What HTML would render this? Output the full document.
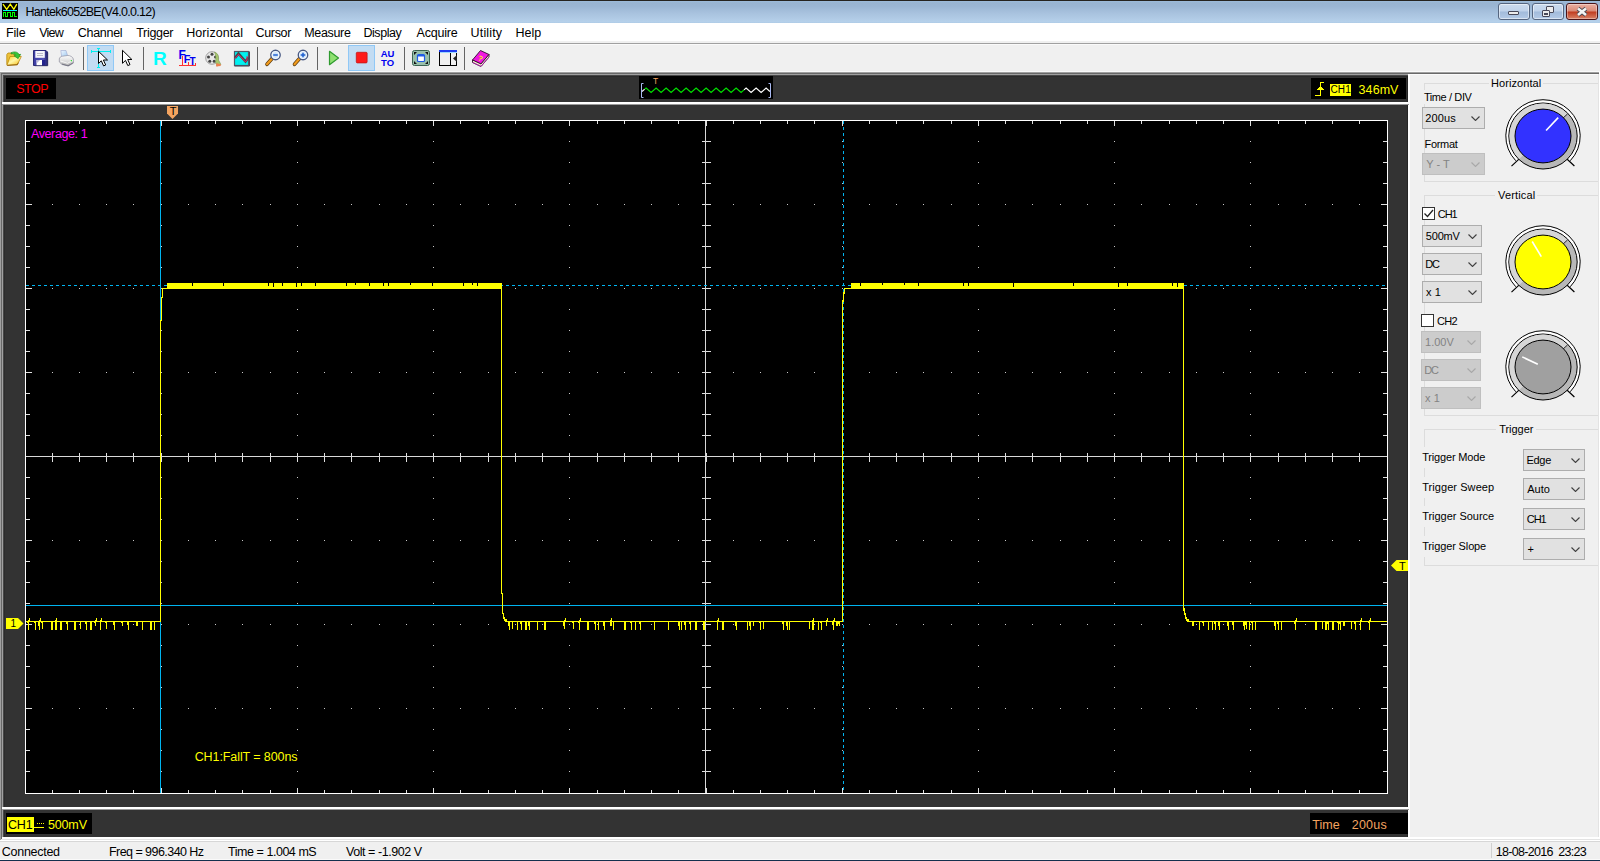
<!DOCTYPE html>
<html><head><meta charset="utf-8"><title>Hantek6052BE(V4.0.0.12)</title>
<style>
*{box-sizing:border-box;margin:0;padding:0}
html,body{width:1600px;height:861px;overflow:hidden;background:#f0f0f0}
body{position:relative;font-family:"Liberation Sans",sans-serif;font-size:11px;color:#000}
.abs{position:absolute}
#title{left:0;top:0;width:1600px;height:23px;background:linear-gradient(#9dbcdc 0,#99b4d1 8%,#9bb6d4 25%,#a8c2de 55%,#b5d0ea 94%,#aecbe6 100%);border-top:1px solid #26231f}
#title .cap{position:absolute;left:26px;top:4px;font-size:12.5px;line-height:15px;color:#000;transform:scaleX(.885);transform-origin:0 0;white-space:nowrap}
#menu{left:0;top:23px;width:1600px;height:18px;background:#fff}
#menu span{position:absolute;top:4px;font-size:12px;line-height:15px}
#tb{left:0;top:43px;width:1600px;height:29px;background:#f0f0f0;border-top:1px solid #a0a0a0}
.sep{position:absolute;top:47px;width:1px;height:23px;background:#646464}
.hot{position:absolute;top:45px;height:26px;width:27px;background:#c2dcf3;border:1px solid #90c8f6}
#scope{left:3px;top:75px;width:1405px;height:762px;background:#333}
.bar{position:absolute;z-index:2;left:2px;width:1407px;height:3px;background:linear-gradient(#fff 0,#fff 66%,#9a9a9a 67%,#9a9a9a 100%)}
.box{position:absolute;background:#000;color:#ff0;font-size:12px;line-height:21px;height:21px;white-space:nowrap}
#right{left:1408px;top:74px;width:192px;height:763px;background:#f0f0f0;border-top:1px solid #fafafa;border-left:2px solid #fff}
.grp{position:absolute;border:1px solid #dcdcdc;border-right:none}
.grp b{position:absolute;top:-8px;font-weight:normal;background:#f0f0f0;padding:0 2px;line-height:14px}
.lbl{position:absolute;line-height:14px;white-space:nowrap}
.cb{position:absolute;height:22px;background:#e1e1e1;border:1px solid #adadad}
.cb.dis{background:#cccccc;border-color:#bfbfbf;color:#838383}
.chk{position:absolute;width:13px;height:13px;background:#fff;border:1px solid #333}
#status{left:0;top:842px;width:1600px;height:19px;background:#f0f0f0;border-bottom:1px solid #14304e;box-shadow:inset 0 -1px 0 #fafafa;font-size:12px}
#status span{position:absolute;top:2px;line-height:15px;white-space:nowrap}
</style></head><body>
<div id="title" class="abs"><svg class="abs" style="left:2px;top:2px" width="16" height="16" viewBox="0 0 16 16"><rect width="16" height="16" fill="#000"/><path d="M1 1.2L4.7 6.3L8.3 1.2L11.8 6.3L14.8 1.2" fill="none" stroke="#ff0" stroke-width="1.3"/><rect x="1" y="7" width="14" height="1" fill="#0ff" shape-rendering="crispEdges"/><path d="M1.5 13.5V9.5H3.5V13.5H5.5V9.5H8V13.5H10V9.5H12.5V13.5H14.5" fill="none" stroke="#0f0" stroke-width="1" shape-rendering="crispEdges"/></svg><div class="abs" style="left:1498px;top:2px;width:32px;height:17px;border:1px solid #55657f;border-radius:3px;background:linear-gradient(#cbdbee 0,#bfd2ea 47%,#a2bbdb 53%,#b4cae6 100%);box-shadow:inset 0 0 0 1px rgba(255,255,255,.5)"><i class="abs" style="left:9px;top:7px;width:11px;height:4px;background:#ececec;border:1px solid #484858;border-radius:1px"></i></div><div class="abs" style="left:1532px;top:2px;width:32px;height:17px;border:1px solid #55657f;border-radius:3px;background:linear-gradient(#cbdbee 0,#bfd2ea 47%,#a2bbdb 53%,#b4cae6 100%);box-shadow:inset 0 0 0 1px rgba(255,255,255,.5)"><i class="abs" style="left:13px;top:2px;width:8px;height:7px;background:#ececec;border:1px solid #484858;border-radius:1px"></i><i class="abs" style="left:9px;top:6px;width:8px;height:7px;background:#ececec;border:1px solid #484858;border-radius:1px"></i><i class="abs" style="left:11px;top:9px;width:4px;height:2px;background:#8ea6cc;border:1px solid #484858"></i></div><div class="abs" style="left:1566px;top:2px;width:32px;height:17px;border:1px solid #4a1418;border-radius:3px;background:linear-gradient(#eab0a2 0,#d98a76 47%,#c03c20 53%,#d88266 100%);box-shadow:inset 0 0 0 1px rgba(255,255,255,.35)"><svg class="abs" style="left:8px;top:2px" width="14" height="12" viewBox="0 0 14 12"><path d="M3 2.500l8 6.500M11 2.500l-8 6.500" stroke="#4a4a52" stroke-width="4.200"/><path d="M3 2.500l8 6.500M11 2.500l-8 6.500" stroke="#f4f4f4" stroke-width="2.600"/></svg></div></div>
<span class="abs" style="left:25.50px;top:4px;font-size:12.5px;line-height:16px;letter-spacing:-0.72px;white-space:pre;">Hantek6052BE(V4.0.0.12)</span><div id="menu" class="abs"></div><span class="abs" style="left:6.00px;top:25px;font-size:12.5px;line-height:16px;letter-spacing:-0.18px;white-space:pre;">File</span><span class="abs" style="left:39.20px;top:25px;font-size:12.5px;line-height:16px;letter-spacing:-0.73px;white-space:pre;">View</span><span class="abs" style="left:77.78px;top:25px;font-size:12.5px;line-height:16px;letter-spacing:-0.29px;white-space:pre;">Channel</span><span class="abs" style="left:136.25px;top:25px;font-size:12.5px;line-height:16px;letter-spacing:-0.32px;white-space:pre;">Trigger</span><span class="abs" style="left:186.30px;top:25px;font-size:12.5px;line-height:16px;letter-spacing:0.04px;white-space:pre;">Horizontal</span><span class="abs" style="left:255.57px;top:25px;font-size:12.5px;line-height:16px;letter-spacing:-0.35px;white-space:pre;">Cursor</span><span class="abs" style="left:304.20px;top:25px;font-size:12.5px;line-height:16px;letter-spacing:-0.32px;white-space:pre;">Measure</span><span class="abs" style="left:363.40px;top:25px;font-size:12.5px;line-height:16px;letter-spacing:-0.43px;white-space:pre;">Display</span><span class="abs" style="left:416.50px;top:25px;font-size:12.5px;line-height:16px;letter-spacing:-0.21px;white-space:pre;">Acquire</span><span class="abs" style="left:470.62px;top:25px;font-size:12.5px;line-height:16px;letter-spacing:0.15px;white-space:pre;">Utility</span><span class="abs" style="left:515.60px;top:25px;font-size:12.5px;line-height:16px;letter-spacing:-0.02px;white-space:pre;">Help</span>
<div id="tb" class="abs"></div><div class="abs" style="left:0;top:44px;width:1600px;height:1px;background:#fafafa"></div>
<div class="hot" style="left:87px"></div><div class="hot" style="left:348px"></div>
<div class="sep" style="left:83px"></div><div class="sep" style="left:143px"></div><div class="sep" style="left:257px"></div><div class="sep" style="left:317px"></div><div class="sep" style="left:404px"></div><div class="sep" style="left:464px"></div>
<svg class="abs" style="left:0;top:44px" width="500" height="29" viewBox="0 44 500 29">
<!-- open folder -->
<defs>
<linearGradient id="gf" x1="0" y1="0" x2="1" y2="1"><stop offset="0" stop-color="#ffd21e"/><stop offset=".45" stop-color="#fff7a8"/><stop offset="1" stop-color="#f5b400"/></linearGradient>
<linearGradient id="gs" x1="0" y1="0" x2="1" y2="0"><stop offset="0" stop-color="#3c3ca4"/><stop offset=".7" stop-color="#5454b8"/><stop offset="1" stop-color="#26266c"/></linearGradient>
<linearGradient id="gp" x1="0" y1="0" x2="0" y2="1"><stop offset="0" stop-color="#fdfdfd"/><stop offset=".6" stop-color="#d8d8d8"/><stop offset="1" stop-color="#a8a8a8"/></linearGradient>
<linearGradient id="gpp" x1="0" y1="0" x2="1" y2="1"><stop offset="0" stop-color="#eef6ff"/><stop offset="1" stop-color="#9cc8f0"/></linearGradient>
</defs>
<g stroke-linejoin="round">
<path d="M6.800 64.800V54.500l1.200-1.500h4l1.200 1.500h6.300v3" fill="#eec23a" stroke="#b88a10" stroke-width=".8"/>
<path d="M7 65.300l3-8.800h11.300l-4 8.200z" fill="url(#gf)" stroke="#c08a0c" stroke-width=".8"/>
<path d="M7.300 65.400l10-0.700l1-2" fill="none" stroke="#8a5a08" stroke-width=".9"/>
<path d="M11 52.800c3.500-1.800 7.200-0.800 8 1.800l1.700-0.300l-2.600 4.400l-4.200-3l1.900-0.400c-0.800-1.500-2.800-1.900-4.800-1.300z" fill="#37c637" stroke="#1e8a1e" stroke-width=".6"/>
</g>
<!-- save -->
<g>
<path d="M33.500 50.500h12.500l1.500 1.500v13.500h-14z" fill="url(#gs)" stroke="#2a2a78" stroke-width="1"/>
<rect x="35.300" y="51" width="9.500" height="6.800" fill="#f6f6fa"/>
<path d="M37 53.500h6M37 55.500h6" stroke="#b4b4c4" stroke-width=".9"/>
<rect x="36.500" y="60" width="9" height="5.300" fill="#24248c"/>
<path d="M36.500 60h5.500v5.300h-5.500z" fill="#fff"/>
<path d="M36.500 60h3.500l-3.500 3.500z" fill="#b8b8d8"/>
<path d="M47.800 52.500v13.300h-13" fill="none" stroke="#39395a" stroke-width=".8" opacity=".7"/>
</g>
<!-- print -->
<g stroke-linejoin="round">
<path d="M60.800 50.500h5.200l1.800 5.800l-6 1.200z" fill="url(#gpp)" stroke="#9aa8d0" stroke-width=".6"/>
<path d="M59.300 59c0-1.500 1.500-2.500 3-2.800l5.500-0.700c2-0.200 5.200 1.500 5.500 3.500l0.200 4l-5 3l-6.500-1.500l-2.700-2.500z" fill="url(#gp)" stroke="#8e8e9e" stroke-width=".7"/>
<path d="M60.500 61l7 2.300l5.500-3" fill="none" stroke="#fff" stroke-width=".8"/>
<path d="M62 64l6 1.800l5-3" fill="none" stroke="#6a6a7a" stroke-width=".8"/>
<rect x="70.800" y="60" width="1.300" height="1.300" fill="#3cd83c"/>
</g>
<!-- cross cursor -->
<g shape-rendering="crispEdges">
<path d="M91 51h20v1h-20zM98 48h1v20h-1zM97 48h3v1h-3zM97 67h3v1h-3zM91 50h1v3h-1zM110 50h1v3h-1z" fill="#00f0f0"/>
</g>
<path d="M98.500 51.300v12.200l2.800-2.700l2.300 5.100l2.100-0.900l-2.300-5h4.100z" fill="#fff" stroke="#000" stroke-width="1"/>
<!-- arrow -->
<path d="M122.500 50.300v13l3-2.900l2.300 5.200l2.200-1l-2.300-5.100h4.200z" fill="#fff" stroke="#000" stroke-width="1"/>
<!-- R -->
<text x="159.800" y="65" text-anchor="middle" font-family="Liberation Sans, sans-serif" font-weight="bold" font-size="19" fill="#00ffff">R</text>
<!-- FFT -->
<g font-family="Liberation Sans, sans-serif" font-weight="bold" fill="#0000f0">
<text x="178.500" y="59" font-size="12">F</text>
<text x="183.800" y="63" font-size="11">F</text>
<text x="189.500" y="65" font-size="10">T</text>
</g>
<path d="M179 65.500h16.500M182.500 56v9.500M188.500 62v3.500M195 63v2.500" stroke="#ff3030" stroke-width="1" fill="none" shape-rendering="crispEdges"/>
<!-- film reel -->
<g>
<circle cx="212" cy="58" r="6.300" fill="#e8e8e8" stroke="#8c8c8c" stroke-width=".8"/>
<circle cx="212" cy="54.200" r="1.500" fill="#444"/><circle cx="208.500" cy="57" r="1.500" fill="#444"/><circle cx="215.500" cy="57" r="1.500" fill="#444"/><circle cx="209.800" cy="61.300" r="1.500" fill="#444"/><circle cx="214.200" cy="61.300" r="1.500" fill="#444"/>
<path d="M214.500 52c3.500 1 4.500 5 4 8l2.500 4.500l-4 1.500l-1.500-4c0.500-3 0.500-7-1-10z" fill="#a6c86e" stroke="#7a9050" stroke-width=".5"/>
<path d="M216.500 63l4.500 1.500l-0.500 1.500l-4.500 0.500z" fill="#f08050"/>
</g>
<!-- wave -->
<g>
<rect x="234.500" y="51.500" width="14" height="14" fill="#00f0f0" stroke="#505868" stroke-width="1.200"/><path d="M234.500 66h15v-14.500" fill="none" stroke="#404858" stroke-width="1"/>
<path d="M235 58l3.500-4.500l7 8l3-4" fill="none" stroke="#484848" stroke-width="2.600"/>
<path d="M235 58.500l3.500-4l7 7.500l1.500-2v-4" fill="none" stroke="#e0206c" stroke-width="1"/>
</g>
<!-- zoom out -->
<g>
<path d="M272.300 58.300l-5.300 6" stroke="#5a3c10" stroke-width="3.600" stroke-linecap="round"/><path d="M272.300 58.300l-5.300 6" stroke="#f09a1c" stroke-width="2.200" stroke-linecap="round"/>

<circle cx="275.500" cy="55" r="4.700" fill="#cfe4fa" stroke="#4a5a84" stroke-width="1.400"/>
<circle cx="275.500" cy="55" r="3.500" fill="none" stroke="#fff" stroke-width=".8"/>
<path d="M273.200 55h4.600" stroke="#2060d0" stroke-width="1.500"/>
</g>
<!-- zoom in -->
<g>
<path d="M299.800 58.300l-5.300 6" stroke="#5a3c10" stroke-width="3.600" stroke-linecap="round"/><path d="M299.800 58.300l-5.300 6" stroke="#f09a1c" stroke-width="2.200" stroke-linecap="round"/>

<circle cx="303" cy="55" r="4.700" fill="#cfe4fa" stroke="#4a5a84" stroke-width="1.400"/>
<circle cx="303" cy="55" r="3.500" fill="none" stroke="#fff" stroke-width=".8"/>
<path d="M300.700 55h4.600M303 52.700v4.600" stroke="#2060d0" stroke-width="1.500"/>
</g>
<!-- play -->
<path d="M329.500 51.300l9 6.700l-9 6.700z" fill="#8ee070" stroke="#2e9a2e" stroke-width="1.200" stroke-linejoin="round"/>
<!-- stop -->
<rect x="356.300" y="52.300" width="10.800" height="10.600" rx="1" fill="#ff1a1a" stroke="#c01818" stroke-width=".8"/>
<!-- AUTO -->
<g font-family="Liberation Sans, sans-serif" font-weight="bold" font-size="9.500" fill="#0000f0" text-anchor="middle">
<text x="387.600" y="57">AU</text><text x="387.600" y="66">TO</text>
</g>
<!-- full screen -->
<g>
<rect x="412.500" y="50.500" width="17" height="15" rx="2" fill="#98c0ac" stroke="#3c6452" stroke-width="1"/>
<path d="M414 52h3l-3 3zM428 52h-3l3 3zM414 64h3l-3-3zM428 64h-3l3-3z" fill="#101010"/>
<rect x="417.500" y="54.500" width="7" height="7" rx="1" fill="#fff" stroke="#1e5ae6" stroke-width="1.200"/>
<rect x="418" y="55" width="6" height="1.500" fill="#1e5ae6"/>
</g>
<!-- window -->
<g shape-rendering="crispEdges">
<rect x="439.500" y="50.500" width="17" height="15" fill="#f0f0f0" stroke="#000" stroke-width="1"/>
<rect x="439" y="50" width="18" height="2" fill="#1e3cf0"/>
<rect x="440" y="52" width="17" height="1" fill="#9fd8ff"/>
<rect x="450" y="53" width="1" height="12" fill="#000"/>
</g>
<path d="M457 55l-4 3.500l4 3.500z" fill="#222"/>
<!-- book -->
<g stroke-linejoin="round">
<path d="M472.500 60l8-9.500l8.500 4l-8 9.500z" fill="#f018e0" stroke="#30082c" stroke-width=".9"/>
<path d="M472.500 60v2.500l8.500 4l8-9.500v-2.500l-8 9.500z" fill="#fafad0" stroke="#30082c" stroke-width=".9"/>
<path d="M473 62.500l8 3.800l7.800-9.200" fill="none" stroke="#c020c0" stroke-width=".8"/>
<text x="480.500" y="61" text-anchor="middle" font-family="Liberation Sans, sans-serif" font-weight="bold" font-size="7.500" fill="#ffe020" stroke="none" transform="rotate(25 480.500 58)">?</text>
</g>
</svg>

<div id="scope" class="abs"></div>
<div class="abs" style="left:0;top:71px;width:1600px;height:1px;background:#fafafa"></div>
<div class="abs" style="left:0;top:72px;width:1599px;height:1px;background:#a0a0a0"></div>
<div class="abs" style="left:1px;top:73px;width:1598px;height:1px;background:#696969"></div>
<div class="abs" style="left:0;top:72px;width:1px;height:768px;background:#a0a0a0"></div>
<div class="abs" style="left:1px;top:73px;width:1px;height:766px;background:#696969"></div>
<div class="abs" style="left:2px;top:74px;width:1406px;height:1px;background:#a0a0a0"></div>
<div class="abs" style="left:2px;top:74px;width:1px;height:764px;background:#a0a0a0"></div>
<div class="abs" style="left:3px;top:75px;width:1405px;height:1px;background:#484848"></div>
<div class="abs" style="left:3px;top:75px;width:1px;height:762px;background:#484848"></div>
<div class="abs" style="left:4px;top:76px;width:1404px;height:1px;background:#2c2c2c"></div>
<div class="abs" style="left:4px;top:76px;width:1px;height:761px;background:#2c2c2c"></div>
<div class="abs" style="left:1407px;top:76px;width:1px;height:761px;background:#262626"></div>
<div class="bar" style="top:102px"></div>
<div class="bar" style="top:807px"></div>
<div class="box" style="left:6px;top:78px;width:50px"></div>
<div class="box" style="left:1311px;top:78px;width:95px"><svg class="abs" style="left:4px;top:4px" width="10" height="14" viewBox="0 0 10 14" shape-rendering="crispEdges"><path fill="#ff0" d="M0 13h5v1h-5zM5 0h1v14h-1zM5 0h4v1h-4zM2 7h7v1h-7zM3 6h5v1h-5zM4 5h3v1h-3zM5 4h1v1h-1z"/></svg><span class="abs" style="left:19px;top:6px;height:12px;width:21px;background:#ff0"></span></div>
<div class="box" style="left:6px;top:813px;width:86px"><span class="abs" style="left:1px;top:4px;height:15px;width:27px;background:#ff0"></span><svg class="abs" style="left:28px;top:10px" width="10" height="5" viewBox="0 0 10 5" shape-rendering="crispEdges"><path fill="#ff0" d="M0 4h10v1h-10zM3 0h1v1h-1zM5 0h1v1h-1zM7 0h1v1h-1zM9 0h1v1h-1z"/></svg></div>
<div class="box" style="left:1310px;top:813px;width:98px"></div>
<div class="box" style="left:639px;top:76px;width:134px;height:23px"><svg class="abs" style="left:0;top:0" width="134" height="23" viewBox="0 0 134 23"><polyline points="3.0,15.5 5.7,13.2" fill="none" stroke="#fff" stroke-width="1.1"/><polyline points="5.7,13.2 7.1,12.0 12.1,16.5 17.1,12.0 22.1,16.5 27.1,12.0 32.1,16.5 37.1,12.0 42.1,16.5 47.1,12.0 52.1,16.5 57.1,12.0 62.1,16.5 67.1,12.0 72.1,16.5 77.1,12.0 82.1,16.5 87.1,12.0 92.1,16.5 97.1,12.0 102.1,16.5 105.0,13.9" fill="none" stroke="#00e000" stroke-width="1.1"/><polyline points="105.0,13.9 107.1,12.0 112.1,16.5 117.1,12.0 122.1,16.5 127.1,12.0 130.9,15.5" fill="none" stroke="#fff" stroke-width="1.1"/><path d="M4.5 7.500h-2v14h2M129.500 7.500h2v14h-2" fill="none" stroke="#a8b8f0" stroke-width="1"/><text x="16.500" y="8" text-anchor="middle" font-size="8.500" fill="#f4a460" font-family="Liberation Sans, sans-serif">T</text></svg></div>
<svg class="plot" width="1408" height="764" viewBox="0 0 1408 764" shape-rendering="crispEdges" style="position:absolute;left:0;top:74px">
<g transform="translate(0,-74)">
<rect x="25" y="120" width="1363" height="674" fill="#000"/>
<path fill="#c8c8c8" d="M52 204h1v1h-1zM79 204h1v1h-1zM106 204h1v1h-1zM133 204h1v1h-1zM161 204h1v1h-1zM188 204h1v1h-1zM215 204h1v1h-1zM242 204h1v1h-1zM270 204h1v1h-1zM297 204h1v1h-1zM324 204h1v1h-1zM351 204h1v1h-1zM379 204h1v1h-1zM406 204h1v1h-1zM433 204h1v1h-1zM460 204h1v1h-1zM488 204h1v1h-1zM515 204h1v1h-1zM542 204h1v1h-1zM569 204h1v1h-1zM597 204h1v1h-1zM624 204h1v1h-1zM651 204h1v1h-1zM678 204h1v1h-1zM706 204h1v1h-1zM733 204h1v1h-1zM760 204h1v1h-1zM787 204h1v1h-1zM814 204h1v1h-1zM842 204h1v1h-1zM869 204h1v1h-1zM896 204h1v1h-1zM923 204h1v1h-1zM951 204h1v1h-1zM978 204h1v1h-1zM1005 204h1v1h-1zM1032 204h1v1h-1zM1060 204h1v1h-1zM1087 204h1v1h-1zM1114 204h1v1h-1zM1141 204h1v1h-1zM1169 204h1v1h-1zM1196 204h1v1h-1zM1223 204h1v1h-1zM1250 204h1v1h-1zM1278 204h1v1h-1zM1305 204h1v1h-1zM1332 204h1v1h-1zM1359 204h1v1h-1zM52 288h1v1h-1zM79 288h1v1h-1zM106 288h1v1h-1zM133 288h1v1h-1zM161 288h1v1h-1zM188 288h1v1h-1zM215 288h1v1h-1zM242 288h1v1h-1zM270 288h1v1h-1zM297 288h1v1h-1zM324 288h1v1h-1zM351 288h1v1h-1zM379 288h1v1h-1zM406 288h1v1h-1zM433 288h1v1h-1zM460 288h1v1h-1zM488 288h1v1h-1zM515 288h1v1h-1zM542 288h1v1h-1zM569 288h1v1h-1zM597 288h1v1h-1zM624 288h1v1h-1zM651 288h1v1h-1zM678 288h1v1h-1zM706 288h1v1h-1zM733 288h1v1h-1zM760 288h1v1h-1zM787 288h1v1h-1zM814 288h1v1h-1zM842 288h1v1h-1zM869 288h1v1h-1zM896 288h1v1h-1zM923 288h1v1h-1zM951 288h1v1h-1zM978 288h1v1h-1zM1005 288h1v1h-1zM1032 288h1v1h-1zM1060 288h1v1h-1zM1087 288h1v1h-1zM1114 288h1v1h-1zM1141 288h1v1h-1zM1169 288h1v1h-1zM1196 288h1v1h-1zM1223 288h1v1h-1zM1250 288h1v1h-1zM1278 288h1v1h-1zM1305 288h1v1h-1zM1332 288h1v1h-1zM1359 288h1v1h-1zM52 372h1v1h-1zM79 372h1v1h-1zM106 372h1v1h-1zM133 372h1v1h-1zM161 372h1v1h-1zM188 372h1v1h-1zM215 372h1v1h-1zM242 372h1v1h-1zM270 372h1v1h-1zM297 372h1v1h-1zM324 372h1v1h-1zM351 372h1v1h-1zM379 372h1v1h-1zM406 372h1v1h-1zM433 372h1v1h-1zM460 372h1v1h-1zM488 372h1v1h-1zM515 372h1v1h-1zM542 372h1v1h-1zM569 372h1v1h-1zM597 372h1v1h-1zM624 372h1v1h-1zM651 372h1v1h-1zM678 372h1v1h-1zM706 372h1v1h-1zM733 372h1v1h-1zM760 372h1v1h-1zM787 372h1v1h-1zM814 372h1v1h-1zM842 372h1v1h-1zM869 372h1v1h-1zM896 372h1v1h-1zM923 372h1v1h-1zM951 372h1v1h-1zM978 372h1v1h-1zM1005 372h1v1h-1zM1032 372h1v1h-1zM1060 372h1v1h-1zM1087 372h1v1h-1zM1114 372h1v1h-1zM1141 372h1v1h-1zM1169 372h1v1h-1zM1196 372h1v1h-1zM1223 372h1v1h-1zM1250 372h1v1h-1zM1278 372h1v1h-1zM1305 372h1v1h-1zM1332 372h1v1h-1zM1359 372h1v1h-1zM52 540h1v1h-1zM79 540h1v1h-1zM106 540h1v1h-1zM133 540h1v1h-1zM161 540h1v1h-1zM188 540h1v1h-1zM215 540h1v1h-1zM242 540h1v1h-1zM270 540h1v1h-1zM297 540h1v1h-1zM324 540h1v1h-1zM351 540h1v1h-1zM379 540h1v1h-1zM406 540h1v1h-1zM433 540h1v1h-1zM460 540h1v1h-1zM488 540h1v1h-1zM515 540h1v1h-1zM542 540h1v1h-1zM569 540h1v1h-1zM597 540h1v1h-1zM624 540h1v1h-1zM651 540h1v1h-1zM678 540h1v1h-1zM706 540h1v1h-1zM733 540h1v1h-1zM760 540h1v1h-1zM787 540h1v1h-1zM814 540h1v1h-1zM842 540h1v1h-1zM869 540h1v1h-1zM896 540h1v1h-1zM923 540h1v1h-1zM951 540h1v1h-1zM978 540h1v1h-1zM1005 540h1v1h-1zM1032 540h1v1h-1zM1060 540h1v1h-1zM1087 540h1v1h-1zM1114 540h1v1h-1zM1141 540h1v1h-1zM1169 540h1v1h-1zM1196 540h1v1h-1zM1223 540h1v1h-1zM1250 540h1v1h-1zM1278 540h1v1h-1zM1305 540h1v1h-1zM1332 540h1v1h-1zM1359 540h1v1h-1zM52 624h1v1h-1zM79 624h1v1h-1zM106 624h1v1h-1zM133 624h1v1h-1zM161 624h1v1h-1zM188 624h1v1h-1zM215 624h1v1h-1zM242 624h1v1h-1zM270 624h1v1h-1zM297 624h1v1h-1zM324 624h1v1h-1zM351 624h1v1h-1zM379 624h1v1h-1zM406 624h1v1h-1zM433 624h1v1h-1zM460 624h1v1h-1zM488 624h1v1h-1zM515 624h1v1h-1zM542 624h1v1h-1zM569 624h1v1h-1zM597 624h1v1h-1zM624 624h1v1h-1zM651 624h1v1h-1zM678 624h1v1h-1zM706 624h1v1h-1zM733 624h1v1h-1zM760 624h1v1h-1zM787 624h1v1h-1zM814 624h1v1h-1zM842 624h1v1h-1zM869 624h1v1h-1zM896 624h1v1h-1zM923 624h1v1h-1zM951 624h1v1h-1zM978 624h1v1h-1zM1005 624h1v1h-1zM1032 624h1v1h-1zM1060 624h1v1h-1zM1087 624h1v1h-1zM1114 624h1v1h-1zM1141 624h1v1h-1zM1169 624h1v1h-1zM1196 624h1v1h-1zM1223 624h1v1h-1zM1250 624h1v1h-1zM1278 624h1v1h-1zM1305 624h1v1h-1zM1332 624h1v1h-1zM1359 624h1v1h-1zM52 708h1v1h-1zM79 708h1v1h-1zM106 708h1v1h-1zM133 708h1v1h-1zM161 708h1v1h-1zM188 708h1v1h-1zM215 708h1v1h-1zM242 708h1v1h-1zM270 708h1v1h-1zM297 708h1v1h-1zM324 708h1v1h-1zM351 708h1v1h-1zM379 708h1v1h-1zM406 708h1v1h-1zM433 708h1v1h-1zM460 708h1v1h-1zM488 708h1v1h-1zM515 708h1v1h-1zM542 708h1v1h-1zM569 708h1v1h-1zM597 708h1v1h-1zM624 708h1v1h-1zM651 708h1v1h-1zM678 708h1v1h-1zM706 708h1v1h-1zM733 708h1v1h-1zM760 708h1v1h-1zM787 708h1v1h-1zM814 708h1v1h-1zM842 708h1v1h-1zM869 708h1v1h-1zM896 708h1v1h-1zM923 708h1v1h-1zM951 708h1v1h-1zM978 708h1v1h-1zM1005 708h1v1h-1zM1032 708h1v1h-1zM1060 708h1v1h-1zM1087 708h1v1h-1zM1114 708h1v1h-1zM1141 708h1v1h-1zM1169 708h1v1h-1zM1196 708h1v1h-1zM1223 708h1v1h-1zM1250 708h1v1h-1zM1278 708h1v1h-1zM1305 708h1v1h-1zM1332 708h1v1h-1zM1359 708h1v1h-1zM161 141h1v1h-1zM161 162h1v1h-1zM161 183h1v1h-1zM161 204h1v1h-1zM161 225h1v1h-1zM161 246h1v1h-1zM161 267h1v1h-1zM161 288h1v1h-1zM161 309h1v1h-1zM161 330h1v1h-1zM161 351h1v1h-1zM161 372h1v1h-1zM161 393h1v1h-1zM161 414h1v1h-1zM161 435h1v1h-1zM161 456h1v1h-1zM161 477h1v1h-1zM161 498h1v1h-1zM161 519h1v1h-1zM161 540h1v1h-1zM161 561h1v1h-1zM161 582h1v1h-1zM161 603h1v1h-1zM161 624h1v1h-1zM161 645h1v1h-1zM161 666h1v1h-1zM161 687h1v1h-1zM161 708h1v1h-1zM161 729h1v1h-1zM161 750h1v1h-1zM161 771h1v1h-1zM297 141h1v1h-1zM297 162h1v1h-1zM297 183h1v1h-1zM297 204h1v1h-1zM297 225h1v1h-1zM297 246h1v1h-1zM297 267h1v1h-1zM297 288h1v1h-1zM297 309h1v1h-1zM297 330h1v1h-1zM297 351h1v1h-1zM297 372h1v1h-1zM297 393h1v1h-1zM297 414h1v1h-1zM297 435h1v1h-1zM297 456h1v1h-1zM297 477h1v1h-1zM297 498h1v1h-1zM297 519h1v1h-1zM297 540h1v1h-1zM297 561h1v1h-1zM297 582h1v1h-1zM297 603h1v1h-1zM297 624h1v1h-1zM297 645h1v1h-1zM297 666h1v1h-1zM297 687h1v1h-1zM297 708h1v1h-1zM297 729h1v1h-1zM297 750h1v1h-1zM297 771h1v1h-1zM433 141h1v1h-1zM433 162h1v1h-1zM433 183h1v1h-1zM433 204h1v1h-1zM433 225h1v1h-1zM433 246h1v1h-1zM433 267h1v1h-1zM433 288h1v1h-1zM433 309h1v1h-1zM433 330h1v1h-1zM433 351h1v1h-1zM433 372h1v1h-1zM433 393h1v1h-1zM433 414h1v1h-1zM433 435h1v1h-1zM433 456h1v1h-1zM433 477h1v1h-1zM433 498h1v1h-1zM433 519h1v1h-1zM433 540h1v1h-1zM433 561h1v1h-1zM433 582h1v1h-1zM433 603h1v1h-1zM433 624h1v1h-1zM433 645h1v1h-1zM433 666h1v1h-1zM433 687h1v1h-1zM433 708h1v1h-1zM433 729h1v1h-1zM433 750h1v1h-1zM433 771h1v1h-1zM569 141h1v1h-1zM569 162h1v1h-1zM569 183h1v1h-1zM569 204h1v1h-1zM569 225h1v1h-1zM569 246h1v1h-1zM569 267h1v1h-1zM569 288h1v1h-1zM569 309h1v1h-1zM569 330h1v1h-1zM569 351h1v1h-1zM569 372h1v1h-1zM569 393h1v1h-1zM569 414h1v1h-1zM569 435h1v1h-1zM569 456h1v1h-1zM569 477h1v1h-1zM569 498h1v1h-1zM569 519h1v1h-1zM569 540h1v1h-1zM569 561h1v1h-1zM569 582h1v1h-1zM569 603h1v1h-1zM569 624h1v1h-1zM569 645h1v1h-1zM569 666h1v1h-1zM569 687h1v1h-1zM569 708h1v1h-1zM569 729h1v1h-1zM569 750h1v1h-1zM569 771h1v1h-1zM842 141h1v1h-1zM842 162h1v1h-1zM842 183h1v1h-1zM842 204h1v1h-1zM842 225h1v1h-1zM842 246h1v1h-1zM842 267h1v1h-1zM842 288h1v1h-1zM842 309h1v1h-1zM842 330h1v1h-1zM842 351h1v1h-1zM842 372h1v1h-1zM842 393h1v1h-1zM842 414h1v1h-1zM842 435h1v1h-1zM842 456h1v1h-1zM842 477h1v1h-1zM842 498h1v1h-1zM842 519h1v1h-1zM842 540h1v1h-1zM842 561h1v1h-1zM842 582h1v1h-1zM842 603h1v1h-1zM842 624h1v1h-1zM842 645h1v1h-1zM842 666h1v1h-1zM842 687h1v1h-1zM842 708h1v1h-1zM842 729h1v1h-1zM842 750h1v1h-1zM842 771h1v1h-1zM978 141h1v1h-1zM978 162h1v1h-1zM978 183h1v1h-1zM978 204h1v1h-1zM978 225h1v1h-1zM978 246h1v1h-1zM978 267h1v1h-1zM978 288h1v1h-1zM978 309h1v1h-1zM978 330h1v1h-1zM978 351h1v1h-1zM978 372h1v1h-1zM978 393h1v1h-1zM978 414h1v1h-1zM978 435h1v1h-1zM978 456h1v1h-1zM978 477h1v1h-1zM978 498h1v1h-1zM978 519h1v1h-1zM978 540h1v1h-1zM978 561h1v1h-1zM978 582h1v1h-1zM978 603h1v1h-1zM978 624h1v1h-1zM978 645h1v1h-1zM978 666h1v1h-1zM978 687h1v1h-1zM978 708h1v1h-1zM978 729h1v1h-1zM978 750h1v1h-1zM978 771h1v1h-1zM1114 141h1v1h-1zM1114 162h1v1h-1zM1114 183h1v1h-1zM1114 204h1v1h-1zM1114 225h1v1h-1zM1114 246h1v1h-1zM1114 267h1v1h-1zM1114 288h1v1h-1zM1114 309h1v1h-1zM1114 330h1v1h-1zM1114 351h1v1h-1zM1114 372h1v1h-1zM1114 393h1v1h-1zM1114 414h1v1h-1zM1114 435h1v1h-1zM1114 456h1v1h-1zM1114 477h1v1h-1zM1114 498h1v1h-1zM1114 519h1v1h-1zM1114 540h1v1h-1zM1114 561h1v1h-1zM1114 582h1v1h-1zM1114 603h1v1h-1zM1114 624h1v1h-1zM1114 645h1v1h-1zM1114 666h1v1h-1zM1114 687h1v1h-1zM1114 708h1v1h-1zM1114 729h1v1h-1zM1114 750h1v1h-1zM1114 771h1v1h-1zM1250 141h1v1h-1zM1250 162h1v1h-1zM1250 183h1v1h-1zM1250 204h1v1h-1zM1250 225h1v1h-1zM1250 246h1v1h-1zM1250 267h1v1h-1zM1250 288h1v1h-1zM1250 309h1v1h-1zM1250 330h1v1h-1zM1250 351h1v1h-1zM1250 372h1v1h-1zM1250 393h1v1h-1zM1250 414h1v1h-1zM1250 435h1v1h-1zM1250 456h1v1h-1zM1250 477h1v1h-1zM1250 498h1v1h-1zM1250 519h1v1h-1zM1250 540h1v1h-1zM1250 561h1v1h-1zM1250 582h1v1h-1zM1250 603h1v1h-1zM1250 624h1v1h-1zM1250 645h1v1h-1zM1250 666h1v1h-1zM1250 687h1v1h-1zM1250 708h1v1h-1zM1250 729h1v1h-1zM1250 750h1v1h-1zM1250 771h1v1h-1z"/>
<path fill="#e0e0e0" d="M52 121h1v3h-1zM52 790h1v3h-1zM79 121h1v3h-1zM79 790h1v3h-1zM106 121h1v3h-1zM106 790h1v3h-1zM133 121h1v3h-1zM133 790h1v3h-1zM161 121h1v5h-1zM161 788h1v5h-1zM188 121h1v3h-1zM188 790h1v3h-1zM215 121h1v3h-1zM215 790h1v3h-1zM242 121h1v3h-1zM242 790h1v3h-1zM270 121h1v3h-1zM270 790h1v3h-1zM297 121h1v5h-1zM297 788h1v5h-1zM324 121h1v3h-1zM324 790h1v3h-1zM351 121h1v3h-1zM351 790h1v3h-1zM379 121h1v3h-1zM379 790h1v3h-1zM406 121h1v3h-1zM406 790h1v3h-1zM433 121h1v5h-1zM433 788h1v5h-1zM460 121h1v3h-1zM460 790h1v3h-1zM488 121h1v3h-1zM488 790h1v3h-1zM515 121h1v3h-1zM515 790h1v3h-1zM542 121h1v3h-1zM542 790h1v3h-1zM569 121h1v5h-1zM569 788h1v5h-1zM597 121h1v3h-1zM597 790h1v3h-1zM624 121h1v3h-1zM624 790h1v3h-1zM651 121h1v3h-1zM651 790h1v3h-1zM678 121h1v3h-1zM678 790h1v3h-1zM706 121h1v5h-1zM706 788h1v5h-1zM733 121h1v3h-1zM733 790h1v3h-1zM760 121h1v3h-1zM760 790h1v3h-1zM787 121h1v3h-1zM787 790h1v3h-1zM814 121h1v3h-1zM814 790h1v3h-1zM842 121h1v5h-1zM842 788h1v5h-1zM869 121h1v3h-1zM869 790h1v3h-1zM896 121h1v3h-1zM896 790h1v3h-1zM923 121h1v3h-1zM923 790h1v3h-1zM951 121h1v3h-1zM951 790h1v3h-1zM978 121h1v5h-1zM978 788h1v5h-1zM1005 121h1v3h-1zM1005 790h1v3h-1zM1032 121h1v3h-1zM1032 790h1v3h-1zM1060 121h1v3h-1zM1060 790h1v3h-1zM1087 121h1v3h-1zM1087 790h1v3h-1zM1114 121h1v5h-1zM1114 788h1v5h-1zM1141 121h1v3h-1zM1141 790h1v3h-1zM1169 121h1v3h-1zM1169 790h1v3h-1zM1196 121h1v3h-1zM1196 790h1v3h-1zM1223 121h1v3h-1zM1223 790h1v3h-1zM1250 121h1v5h-1zM1250 788h1v5h-1zM1278 121h1v3h-1zM1278 790h1v3h-1zM1305 121h1v3h-1zM1305 790h1v3h-1zM1332 121h1v3h-1zM1332 790h1v3h-1zM1359 121h1v3h-1zM1359 790h1v3h-1zM26 141h4v1h-4zM1383 141h4v1h-4zM26 162h4v1h-4zM1383 162h4v1h-4zM26 183h4v1h-4zM1383 183h4v1h-4zM26 204h6v1h-6zM1381 204h6v1h-6zM26 225h4v1h-4zM1383 225h4v1h-4zM26 246h4v1h-4zM1383 246h4v1h-4zM26 267h4v1h-4zM1383 267h4v1h-4zM26 288h6v1h-6zM1381 288h6v1h-6zM26 309h4v1h-4zM1383 309h4v1h-4zM26 330h4v1h-4zM1383 330h4v1h-4zM26 351h4v1h-4zM1383 351h4v1h-4zM26 372h6v1h-6zM1381 372h6v1h-6zM26 393h4v1h-4zM1383 393h4v1h-4zM26 414h4v1h-4zM1383 414h4v1h-4zM26 435h4v1h-4zM1383 435h4v1h-4zM26 456h6v1h-6zM1381 456h6v1h-6zM26 477h4v1h-4zM1383 477h4v1h-4zM26 498h4v1h-4zM1383 498h4v1h-4zM26 519h4v1h-4zM1383 519h4v1h-4zM26 540h6v1h-6zM1381 540h6v1h-6zM26 561h4v1h-4zM1383 561h4v1h-4zM26 582h4v1h-4zM1383 582h4v1h-4zM26 603h4v1h-4zM1383 603h4v1h-4zM26 624h6v1h-6zM1381 624h6v1h-6zM26 645h4v1h-4zM1383 645h4v1h-4zM26 666h4v1h-4zM1383 666h4v1h-4zM26 687h4v1h-4zM1383 687h4v1h-4zM26 708h6v1h-6zM1381 708h6v1h-6zM26 729h4v1h-4zM1383 729h4v1h-4zM26 750h4v1h-4zM1383 750h4v1h-4zM26 771h4v1h-4zM1383 771h4v1h-4zM52 453h1v9h-1zM79 453h1v9h-1zM106 453h1v9h-1zM133 453h1v9h-1zM161 453h1v9h-1zM188 453h1v9h-1zM215 453h1v9h-1zM242 453h1v9h-1zM270 453h1v9h-1zM297 453h1v9h-1zM324 453h1v9h-1zM351 453h1v9h-1zM379 453h1v9h-1zM406 453h1v9h-1zM433 453h1v9h-1zM460 453h1v9h-1zM488 453h1v9h-1zM515 453h1v9h-1zM542 453h1v9h-1zM569 453h1v9h-1zM597 453h1v9h-1zM624 453h1v9h-1zM651 453h1v9h-1zM678 453h1v9h-1zM706 453h1v9h-1zM733 453h1v9h-1zM760 453h1v9h-1zM787 453h1v9h-1zM814 453h1v9h-1zM842 453h1v9h-1zM869 453h1v9h-1zM896 453h1v9h-1zM923 453h1v9h-1zM951 453h1v9h-1zM978 453h1v9h-1zM1005 453h1v9h-1zM1032 453h1v9h-1zM1060 453h1v9h-1zM1087 453h1v9h-1zM1114 453h1v9h-1zM1141 453h1v9h-1zM1169 453h1v9h-1zM1196 453h1v9h-1zM1223 453h1v9h-1zM1250 453h1v9h-1zM1278 453h1v9h-1zM1305 453h1v9h-1zM1332 453h1v9h-1zM1359 453h1v9h-1zM702 141h9v1h-9zM702 162h9v1h-9zM702 183h9v1h-9zM702 204h9v1h-9zM702 225h9v1h-9zM702 246h9v1h-9zM702 267h9v1h-9zM702 288h9v1h-9zM702 309h9v1h-9zM702 330h9v1h-9zM702 351h9v1h-9zM702 372h9v1h-9zM702 393h9v1h-9zM702 414h9v1h-9zM702 435h9v1h-9zM702 456h9v1h-9zM702 477h9v1h-9zM702 498h9v1h-9zM702 519h9v1h-9zM702 540h9v1h-9zM702 561h9v1h-9zM702 582h9v1h-9zM702 603h9v1h-9zM702 624h9v1h-9zM702 645h9v1h-9zM702 666h9v1h-9zM702 687h9v1h-9zM702 708h9v1h-9zM702 729h9v1h-9zM702 750h9v1h-9zM702 771h9v1h-9z"/>
<rect x="705" y="120" width="1" height="673" fill="#d8d8d8"/>
<rect x="25" y="456" width="1362" height="1" fill="#d8d8d8"/>
<path fill="none" stroke="#fff" stroke-width="1" d="M25.5 120.5H1387.5V793.5H25.5z"/>
<rect x="26" y="605" width="1361" height="1" fill="#00b4f0"/>
<rect x="160" y="121" width="1" height="672" fill="#00b4f0"/>
<path fill="#00b4f0" d="M26 285h3v1h-3zM32 285h3v1h-3zM38 285h3v1h-3zM44 285h3v1h-3zM50 285h3v1h-3zM56 285h3v1h-3zM62 285h3v1h-3zM68 285h3v1h-3zM74 285h3v1h-3zM80 285h3v1h-3zM86 285h3v1h-3zM92 285h3v1h-3zM98 285h3v1h-3zM104 285h3v1h-3zM110 285h3v1h-3zM116 285h3v1h-3zM122 285h3v1h-3zM128 285h3v1h-3zM134 285h3v1h-3zM140 285h3v1h-3zM146 285h3v1h-3zM152 285h3v1h-3zM158 285h3v1h-3zM164 285h3v1h-3zM170 285h3v1h-3zM176 285h3v1h-3zM182 285h3v1h-3zM188 285h3v1h-3zM194 285h3v1h-3zM200 285h3v1h-3zM206 285h3v1h-3zM212 285h3v1h-3zM218 285h3v1h-3zM224 285h3v1h-3zM230 285h3v1h-3zM236 285h3v1h-3zM242 285h3v1h-3zM248 285h3v1h-3zM254 285h3v1h-3zM260 285h3v1h-3zM266 285h3v1h-3zM272 285h3v1h-3zM278 285h3v1h-3zM284 285h3v1h-3zM290 285h3v1h-3zM296 285h3v1h-3zM302 285h3v1h-3zM308 285h3v1h-3zM314 285h3v1h-3zM320 285h3v1h-3zM326 285h3v1h-3zM332 285h3v1h-3zM338 285h3v1h-3zM344 285h3v1h-3zM350 285h3v1h-3zM356 285h3v1h-3zM362 285h3v1h-3zM368 285h3v1h-3zM374 285h3v1h-3zM380 285h3v1h-3zM386 285h3v1h-3zM392 285h3v1h-3zM398 285h3v1h-3zM404 285h3v1h-3zM410 285h3v1h-3zM416 285h3v1h-3zM422 285h3v1h-3zM428 285h3v1h-3zM434 285h3v1h-3zM440 285h3v1h-3zM446 285h3v1h-3zM452 285h3v1h-3zM458 285h3v1h-3zM464 285h3v1h-3zM470 285h3v1h-3zM476 285h3v1h-3zM482 285h3v1h-3zM488 285h3v1h-3zM494 285h3v1h-3zM500 285h3v1h-3zM506 285h3v1h-3zM512 285h3v1h-3zM518 285h3v1h-3zM524 285h3v1h-3zM530 285h3v1h-3zM536 285h3v1h-3zM542 285h3v1h-3zM548 285h3v1h-3zM554 285h3v1h-3zM560 285h3v1h-3zM566 285h3v1h-3zM572 285h3v1h-3zM578 285h3v1h-3zM584 285h3v1h-3zM590 285h3v1h-3zM596 285h3v1h-3zM602 285h3v1h-3zM608 285h3v1h-3zM614 285h3v1h-3zM620 285h3v1h-3zM626 285h3v1h-3zM632 285h3v1h-3zM638 285h3v1h-3zM644 285h3v1h-3zM650 285h3v1h-3zM656 285h3v1h-3zM662 285h3v1h-3zM668 285h3v1h-3zM674 285h3v1h-3zM680 285h3v1h-3zM686 285h3v1h-3zM692 285h3v1h-3zM698 285h3v1h-3zM704 285h3v1h-3zM710 285h3v1h-3zM716 285h3v1h-3zM722 285h3v1h-3zM728 285h3v1h-3zM734 285h3v1h-3zM740 285h3v1h-3zM746 285h3v1h-3zM752 285h3v1h-3zM758 285h3v1h-3zM764 285h3v1h-3zM770 285h3v1h-3zM776 285h3v1h-3zM782 285h3v1h-3zM788 285h3v1h-3zM794 285h3v1h-3zM800 285h3v1h-3zM806 285h3v1h-3zM812 285h3v1h-3zM818 285h3v1h-3zM824 285h3v1h-3zM830 285h3v1h-3zM836 285h3v1h-3zM842 285h3v1h-3zM848 285h3v1h-3zM854 285h3v1h-3zM860 285h3v1h-3zM866 285h3v1h-3zM872 285h3v1h-3zM878 285h3v1h-3zM884 285h3v1h-3zM890 285h3v1h-3zM896 285h3v1h-3zM902 285h3v1h-3zM908 285h3v1h-3zM914 285h3v1h-3zM920 285h3v1h-3zM926 285h3v1h-3zM932 285h3v1h-3zM938 285h3v1h-3zM944 285h3v1h-3zM950 285h3v1h-3zM956 285h3v1h-3zM962 285h3v1h-3zM968 285h3v1h-3zM974 285h3v1h-3zM980 285h3v1h-3zM986 285h3v1h-3zM992 285h3v1h-3zM998 285h3v1h-3zM1004 285h3v1h-3zM1010 285h3v1h-3zM1016 285h3v1h-3zM1022 285h3v1h-3zM1028 285h3v1h-3zM1034 285h3v1h-3zM1040 285h3v1h-3zM1046 285h3v1h-3zM1052 285h3v1h-3zM1058 285h3v1h-3zM1064 285h3v1h-3zM1070 285h3v1h-3zM1076 285h3v1h-3zM1082 285h3v1h-3zM1088 285h3v1h-3zM1094 285h3v1h-3zM1100 285h3v1h-3zM1106 285h3v1h-3zM1112 285h3v1h-3zM1118 285h3v1h-3zM1124 285h3v1h-3zM1130 285h3v1h-3zM1136 285h3v1h-3zM1142 285h3v1h-3zM1148 285h3v1h-3zM1154 285h3v1h-3zM1160 285h3v1h-3zM1166 285h3v1h-3zM1172 285h3v1h-3zM1178 285h3v1h-3zM1184 285h3v1h-3zM1190 285h3v1h-3zM1196 285h3v1h-3zM1202 285h3v1h-3zM1208 285h3v1h-3zM1214 285h3v1h-3zM1220 285h3v1h-3zM1226 285h3v1h-3zM1232 285h3v1h-3zM1238 285h3v1h-3zM1244 285h3v1h-3zM1250 285h3v1h-3zM1256 285h3v1h-3zM1262 285h3v1h-3zM1268 285h3v1h-3zM1274 285h3v1h-3zM1280 285h3v1h-3zM1286 285h3v1h-3zM1292 285h3v1h-3zM1298 285h3v1h-3zM1304 285h3v1h-3zM1310 285h3v1h-3zM1316 285h3v1h-3zM1322 285h3v1h-3zM1328 285h3v1h-3zM1334 285h3v1h-3zM1340 285h3v1h-3zM1346 285h3v1h-3zM1352 285h3v1h-3zM1358 285h3v1h-3zM1364 285h3v1h-3zM1370 285h3v1h-3zM1376 285h3v1h-3zM1382 285h3v1h-3z"/>
<path fill="#00b4f0" d="M843 121h1v3h-1zM843 127h1v3h-1zM843 133h1v3h-1zM843 139h1v3h-1zM843 145h1v3h-1zM843 151h1v3h-1zM843 157h1v3h-1zM843 163h1v3h-1zM843 169h1v3h-1zM843 175h1v3h-1zM843 181h1v3h-1zM843 187h1v3h-1zM843 193h1v3h-1zM843 199h1v3h-1zM843 205h1v3h-1zM843 211h1v3h-1zM843 217h1v3h-1zM843 223h1v3h-1zM843 229h1v3h-1zM843 235h1v3h-1zM843 241h1v3h-1zM843 247h1v3h-1zM843 253h1v3h-1zM843 259h1v3h-1zM843 265h1v3h-1zM843 271h1v3h-1zM843 277h1v3h-1zM843 283h1v3h-1zM843 289h1v3h-1zM843 295h1v3h-1zM843 301h1v3h-1zM843 307h1v3h-1zM843 313h1v3h-1zM843 319h1v3h-1zM843 325h1v3h-1zM843 331h1v3h-1zM843 337h1v3h-1zM843 343h1v3h-1zM843 349h1v3h-1zM843 355h1v3h-1zM843 361h1v3h-1zM843 367h1v3h-1zM843 373h1v3h-1zM843 379h1v3h-1zM843 385h1v3h-1zM843 391h1v3h-1zM843 397h1v3h-1zM843 403h1v3h-1zM843 409h1v3h-1zM843 415h1v3h-1zM843 421h1v3h-1zM843 427h1v3h-1zM843 433h1v3h-1zM843 439h1v3h-1zM843 445h1v3h-1zM843 451h1v3h-1zM843 457h1v3h-1zM843 463h1v3h-1zM843 469h1v3h-1zM843 475h1v3h-1zM843 481h1v3h-1zM843 487h1v3h-1zM843 493h1v3h-1zM843 499h1v3h-1zM843 505h1v3h-1zM843 511h1v3h-1zM843 517h1v3h-1zM843 523h1v3h-1zM843 529h1v3h-1zM843 535h1v3h-1zM843 541h1v3h-1zM843 547h1v3h-1zM843 553h1v3h-1zM843 559h1v3h-1zM843 565h1v3h-1zM843 571h1v3h-1zM843 577h1v3h-1zM843 583h1v3h-1zM843 589h1v3h-1zM843 595h1v3h-1zM843 601h1v3h-1zM843 607h1v3h-1zM843 613h1v3h-1zM843 619h1v3h-1zM843 625h1v3h-1zM843 631h1v3h-1zM843 637h1v3h-1zM843 643h1v3h-1zM843 649h1v3h-1zM843 655h1v3h-1zM843 661h1v3h-1zM843 667h1v3h-1zM843 673h1v3h-1zM843 679h1v3h-1zM843 685h1v3h-1zM843 691h1v3h-1zM843 697h1v3h-1zM843 703h1v3h-1zM843 709h1v3h-1zM843 715h1v3h-1zM843 721h1v3h-1zM843 727h1v3h-1zM843 733h1v3h-1zM843 739h1v3h-1zM843 745h1v3h-1zM843 751h1v3h-1zM843 757h1v3h-1zM843 763h1v3h-1zM843 769h1v3h-1zM843 775h1v3h-1zM843 781h1v3h-1zM843 787h1v3h-1z"/>
<path fill="#ffff00" d="M26 621h134v1h-134zM28 621h1v9h-1zM27 621h1v2h-1zM29 618h1v3h-1zM28 620h1v2h-1zM35 621h1v9h-1zM34 621h1v2h-1zM39 621h1v9h-1zM38 621h1v5h-1zM40 618h1v3h-1zM39 620h1v2h-1zM42 621h1v8h-1zM41 621h1v2h-1zM51 621h1v9h-1zM52 621h1v9h-1zM55 621h1v9h-1zM56 621h1v9h-1zM56 618h1v3h-1zM55 620h1v2h-1zM60 621h1v9h-1zM61 621h1v9h-1zM67 621h1v9h-1zM66 621h1v3h-1zM74 621h1v9h-1zM75 621h1v9h-1zM80 621h1v8h-1zM86 621h1v9h-1zM85 621h1v3h-1zM90 621h1v9h-1zM91 621h1v9h-1zM95 621h1v5h-1zM94 621h1v2h-1zM96 618h1v3h-1zM95 620h1v2h-1zM100 621h1v9h-1zM101 618h1v3h-1zM100 620h1v2h-1zM106 621h1v8h-1zM105 621h1v2h-1zM114 621h1v9h-1zM113 621h1v4h-1zM122 621h1v5h-1zM121 621h1v2h-1zM128 621h1v9h-1zM127 621h1v4h-1zM137 621h1v5h-1zM136 621h1v5h-1zM142 621h1v9h-1zM150 621h1v9h-1zM151 621h1v9h-1zM154 621h1v9h-1zM160 320h1v302h-1zM161 297h1v24h-1zM162 289h1v9h-1zM162 288h6v1h-6zM167 283h335v6h-335zM501 283h1v311h-1zM502 593h1v21h-1zM503 613h1v6h-1zM504 617h1v4h-1zM505 619h2v3h-2zM506 621h336v1h-336zM509 621h1v9h-1zM508 621h1v5h-1zM512 621h1v8h-1zM517 621h1v9h-1zM521 621h1v9h-1zM520 621h1v3h-1zM525 621h1v9h-1zM526 621h1v9h-1zM529 621h1v9h-1zM528 621h1v5h-1zM537 621h1v9h-1zM544 621h1v9h-1zM545 621h1v9h-1zM564 621h1v8h-1zM563 621h1v5h-1zM565 618h1v3h-1zM564 620h1v2h-1zM573 621h1v8h-1zM572 621h1v2h-1zM579 621h1v9h-1zM578 621h1v2h-1zM580 618h1v3h-1zM579 620h1v2h-1zM587 621h1v9h-1zM588 621h1v9h-1zM595 621h1v9h-1zM594 621h1v3h-1zM598 621h1v9h-1zM604 621h1v9h-1zM603 621h1v5h-1zM610 621h1v5h-1zM611 621h1v5h-1zM611 618h1v3h-1zM610 620h1v2h-1zM613 621h1v9h-1zM624 621h1v9h-1zM625 621h1v9h-1zM631 621h1v9h-1zM630 621h1v2h-1zM635 621h1v9h-1zM640 621h1v9h-1zM639 621h1v3h-1zM654 621h1v9h-1zM668 621h1v9h-1zM679 621h1v9h-1zM678 621h1v5h-1zM681 621h1v9h-1zM685 621h1v9h-1zM684 621h1v4h-1zM690 621h1v9h-1zM689 621h1v3h-1zM695 621h1v9h-1zM696 621h1v9h-1zM703 621h1v9h-1zM704 621h1v9h-1zM717 621h1v9h-1zM718 618h1v3h-1zM717 620h1v2h-1zM722 621h1v9h-1zM723 621h1v9h-1zM736 621h1v9h-1zM735 621h1v5h-1zM747 621h1v9h-1zM750 621h1v9h-1zM749 621h1v5h-1zM753 621h1v5h-1zM760 621h1v9h-1zM759 621h1v2h-1zM763 621h1v8h-1zM783 621h1v9h-1zM782 621h1v3h-1zM787 621h1v9h-1zM786 621h1v5h-1zM789 621h1v9h-1zM809 621h1v8h-1zM812 621h1v9h-1zM813 621h1v9h-1zM813 618h1v3h-1zM812 620h1v2h-1zM818 621h1v9h-1zM821 621h1v9h-1zM820 621h1v2h-1zM826 621h1v5h-1zM827 618h1v3h-1zM826 620h1v2h-1zM833 621h1v9h-1zM832 621h1v4h-1zM834 618h1v3h-1zM833 620h1v2h-1zM836 621h1v5h-1zM837 621h1v5h-1zM839 621h1v5h-1zM838 621h1v3h-1zM842 300h1v322h-1zM843 292h1v10h-1zM844 288h1v6h-1zM845 288h8v1h-8zM851 283h333v6h-333zM1183 283h1v328h-1zM1184 608h1v7h-1zM1185 613h1v6h-1zM1186 617h1v4h-1zM1187 619h2v3h-2zM1188 621h199v1h-199zM1192 621h1v5h-1zM1193 621h1v5h-1zM1199 621h1v9h-1zM1203 621h1v5h-1zM1202 621h1v2h-1zM1208 621h1v9h-1zM1212 621h1v9h-1zM1215 621h1v9h-1zM1214 621h1v3h-1zM1219 621h1v9h-1zM1218 621h1v5h-1zM1228 621h1v9h-1zM1227 621h1v5h-1zM1233 621h1v9h-1zM1232 621h1v4h-1zM1244 621h1v9h-1zM1243 621h1v5h-1zM1246 621h1v8h-1zM1245 621h1v4h-1zM1249 621h1v9h-1zM1252 621h1v9h-1zM1251 621h1v2h-1zM1255 621h1v9h-1zM1275 621h1v9h-1zM1274 621h1v5h-1zM1278 621h1v9h-1zM1277 621h1v3h-1zM1281 621h1v9h-1zM1295 621h1v9h-1zM1294 621h1v3h-1zM1296 618h1v3h-1zM1295 620h1v2h-1zM1315 621h1v9h-1zM1316 621h1v9h-1zM1322 621h1v8h-1zM1325 621h1v9h-1zM1326 621h1v9h-1zM1328 621h1v9h-1zM1327 621h1v3h-1zM1332 621h1v9h-1zM1333 621h1v9h-1zM1338 621h1v9h-1zM1337 621h1v2h-1zM1340 621h1v9h-1zM1339 621h1v3h-1zM1344 621h1v5h-1zM1343 621h1v5h-1zM1351 621h1v8h-1zM1355 621h1v9h-1zM1354 621h1v3h-1zM1360 621h1v9h-1zM1361 618h1v3h-1zM1360 620h1v2h-1zM1369 621h1v9h-1zM1368 621h1v2h-1zM1370 618h1v3h-1zM1369 620h1v2h-1z"/>
<path fill="#000" d="M192 283h1v3h-1zM223 283h1v3h-1zM268 283h1v3h-1zM273 283h1v4h-1zM282 283h1v3h-1zM296 283h1v4h-1zM301 283h1v3h-1zM315 283h1v3h-1zM346 283h1v3h-1zM355 283h1v2h-1zM369 283h1v3h-1zM383 283h1v3h-1zM388 283h1v3h-1zM410 283h1v2h-1zM432 283h1v3h-1zM463 283h1v3h-1zM472 283h1v2h-1zM477 283h1v3h-1zM860 283h1v3h-1zM882 283h1v2h-1zM904 283h1v2h-1zM918 283h1v3h-1zM963 283h1v3h-1zM968 283h1v3h-1zM1013 283h1v4h-1zM1073 283h1v3h-1zM1118 283h1v4h-1zM1127 283h1v3h-1zM1172 283h1v3h-1zM1177 283h1v4h-1z"/>
<path shape-rendering="auto" fill="#f4a460" d="M167 106H178V113.5L172.5 119L167 113.5z"/>
<text x="173.2" y="115" text-anchor="middle" fill="#000" font-family="Liberation Sans, sans-serif" font-size="11">T</text>
<path shape-rendering="auto" fill="#ffff00" d="M6 618H18L23.5 623.5L18 629H6z"/>
<text x="13.3" y="627" text-anchor="middle" fill="#000" font-family="Liberation Sans, sans-serif" font-size="10">1</text>
<path shape-rendering="auto" fill="#ffff00" d="M1391 565.5L1396.5 560H1408V571H1396.5z"/>
<text x="1402.3" y="570" text-anchor="middle" fill="#000" font-family="Liberation Sans, sans-serif" font-size="11">T</text>
</g></svg>
<span class="abs" style="left:16.20px;top:81px;font-size:12.5px;line-height:16px;letter-spacing:-0.48px;white-space:pre;color:#ff0000;">STOP</span><span class="abs" style="left:31.00px;top:126px;font-size:12.5px;line-height:16px;letter-spacing:-0.40px;white-space:pre;color:#ff00ff;">Average: 1</span><span class="abs" style="left:194.68px;top:749px;font-size:12.5px;line-height:16px;letter-spacing:-0.09px;white-space:pre;color:#ffff00;">CH1:FallT = 800ns</span><span class="abs" style="left:1330.50px;top:83px;font-size:10px;line-height:13px;letter-spacing:0.14px;white-space:pre;color:#000;">CH1</span><span class="abs" style="left:1358.62px;top:82px;font-size:12.5px;line-height:16px;letter-spacing:0.06px;white-space:pre;color:#ffff00;">346mV</span><span class="abs" style="left:7.88px;top:817px;font-size:12.5px;line-height:16px;letter-spacing:-0.12px;white-space:pre;color:#000;">CH1</span><span class="abs" style="left:47.90px;top:817px;font-size:12.5px;line-height:16px;letter-spacing:-0.13px;white-space:pre;color:#ffff00;">500mV</span><span class="abs" style="left:1312.15px;top:817px;font-size:12.5px;line-height:16px;letter-spacing:0.12px;white-space:pre;color:#f4a460;">Time</span><span class="abs" style="left:1351.67px;top:817px;font-size:12.5px;line-height:16px;letter-spacing:0.28px;white-space:pre;color:#f4a460;">200us</span>
<div id="right" class="abs"></div><div class="abs" style="left:1598px;top:74px;width:1px;height:765px;background:#e3e3e3"></div><div class="abs" style="left:1599px;top:72px;width:1px;height:768px;background:#fff"></div>
<div class="grp" style="left:1424px;top:83px;width:174px;height:99px"></div><div class="abs" style="left:1489px;top:82px;width:54px;height:3px;background:#f0f0f0"></div><span class="abs" style="left:1491.12px;top:76px;font-size:11px;line-height:14px;letter-spacing:0.06px;white-space:pre;">Horizontal</span>
<span class="abs" style="left:1423.88px;top:90px;font-size:11px;line-height:14px;letter-spacing:-0.39px;white-space:pre;background:#f0f0f0;">Time / DIV</span>
<div class="cb" style="left:1422px;top:107px;width:63px"></div><span class="abs" style="left:1425.30px;top:111px;font-size:11px;line-height:14px;letter-spacing:0.14px;white-space:pre;color:#000;">200us</span><span class="abs" style="left:1471px;top:116px;line-height:0"><svg width="9" height="5" viewBox="0 0 9 5"><path d="M0.5 0.5l4 4l4-4" fill="none" stroke="#404040" stroke-width="1.1"/></svg></span>
<span class="abs" style="left:1424.53px;top:137px;font-size:11px;line-height:14px;letter-spacing:-0.30px;white-space:pre;background:#f0f0f0;">Format</span>
<div class="cb dis" style="left:1422px;top:153px;width:63px"></div><span class="abs" style="left:1426.25px;top:157px;font-size:11px;line-height:14px;letter-spacing:0.00px;white-space:pre;color:#838383;">Y - T</span><span class="abs" style="left:1471px;top:162px;line-height:0"><svg width="9" height="5" viewBox="0 0 9 5"><path d="M0.5 0.5l4 4l4-4" fill="none" stroke="#a8a8a8" stroke-width="1.1"/></svg></span>
<svg class="abs" style="left:1498.2px;top:90.9px" width="90" height="90" viewBox="-45 -45 90 90"><path d="M-19.8 19.1L-31.5 30.1M23.7 22.8L31.4 30" stroke="#000" stroke-width="1.2" fill="none"/><path d="M-26.11 23.63A35.7 34.65 0 1 1 26.11 23.63" fill="none" stroke="#fff" stroke-width="3.2"/><path d="M-27.21 24.76A37.2 36.3 0 1 1 27.21 24.76" fill="none" stroke="#000" stroke-width="1"/><ellipse rx="34.2" ry="33" fill="#b8b8b8" stroke="#000" stroke-width="1"/><path d="M-23.76 22.91A33.6 32.4 0 1 1 24.57 -22.10L20.33 -18.21A27.8 26.7 0 1 0 -19.66 18.88z" fill="#d6d6d6"/><path d="M24.57 -22.10L20.33 -18.21" stroke="#000" stroke-width=".8"/><ellipse rx="28" ry="26.9" fill="#3232ff" stroke="#000" stroke-width="1"/><path d="M3.1 -5.5L15.2 -18.4" stroke="#fff" stroke-width="1.6" fill="none"/></svg>
<div class="grp" style="left:1424px;top:195px;width:174px;height:221px"></div><div class="abs" style="left:1495px;top:194px;width:42px;height:3px;background:#f0f0f0"></div><span class="abs" style="left:1498.00px;top:188px;font-size:11px;line-height:14px;letter-spacing:0.16px;white-space:pre;">Vertical</span>
<div class="chk" style="left:1422px;top:207px"><svg width="11" height="11" viewBox="0 0 11 11"><path d="M1.5 5.5l3 3l5.5-6.5" fill="none" stroke="#222" stroke-width="1.3"/></svg></div>
<span class="abs" style="left:1437.80px;top:207px;font-size:11px;line-height:14px;letter-spacing:-1.10px;white-space:pre;background:#f0f0f0;">CH1</span>
<div class="cb" style="left:1422px;top:225px;width:60px"></div><span class="abs" style="left:1425.83px;top:229px;font-size:11px;line-height:14px;letter-spacing:-0.20px;white-space:pre;color:#000;">500mV</span><span class="abs" style="left:1468px;top:234px;line-height:0"><svg width="9" height="5" viewBox="0 0 9 5"><path d="M0.5 0.5l4 4l4-4" fill="none" stroke="#404040" stroke-width="1.1"/></svg></span>
<div class="cb" style="left:1422px;top:253px;width:60px"></div><span class="abs" style="left:1425.33px;top:257px;font-size:11px;line-height:14px;letter-spacing:-1.25px;white-space:pre;color:#000;">DC</span><span class="abs" style="left:1468px;top:262px;line-height:0"><svg width="9" height="5" viewBox="0 0 9 5"><path d="M0.5 0.5l4 4l4-4" fill="none" stroke="#404040" stroke-width="1.1"/></svg></span>
<div class="cb" style="left:1422px;top:281px;width:60px"></div><span class="abs" style="left:1426.08px;top:285px;font-size:11px;line-height:14px;letter-spacing:0.10px;white-space:pre;color:#000;">x 1</span><span class="abs" style="left:1468px;top:290px;line-height:0"><svg width="9" height="5" viewBox="0 0 9 5"><path d="M0.5 0.5l4 4l4-4" fill="none" stroke="#404040" stroke-width="1.1"/></svg></span>
<svg class="abs" style="left:1498.2px;top:216.8px" width="90" height="90" viewBox="-45 -45 90 90"><path d="M-19.8 19.1L-31.5 30.1M23.7 22.8L31.4 30" stroke="#000" stroke-width="1.2" fill="none"/><path d="M-26.11 23.63A35.7 34.65 0 1 1 26.11 23.63" fill="none" stroke="#fff" stroke-width="3.2"/><path d="M-27.21 24.76A37.2 36.3 0 1 1 27.21 24.76" fill="none" stroke="#000" stroke-width="1"/><ellipse rx="34.2" ry="33" fill="#b8b8b8" stroke="#000" stroke-width="1"/><path d="M-23.76 22.91A33.6 32.4 0 1 1 24.57 -22.10L20.33 -18.21A27.8 26.7 0 1 0 -19.66 18.88z" fill="#d6d6d6"/><path d="M24.57 -22.10L20.33 -18.21" stroke="#000" stroke-width=".8"/><ellipse rx="28" ry="26.9" fill="#ffff00" stroke="#000" stroke-width="1"/><path d="M-1.7 -5.4L-10.8 -20.5" stroke="#fff" stroke-width="1.6" fill="none"/></svg>
<div class="chk" style="left:1421px;top:314px"></div>
<span class="abs" style="left:1436.90px;top:314px;font-size:11px;line-height:14px;letter-spacing:-0.65px;white-space:pre;background:#f0f0f0;">CH2</span>
<div class="cb dis" style="left:1421px;top:331px;width:60px"></div><span class="abs" style="left:1425.05px;top:335px;font-size:11px;line-height:14px;letter-spacing:-0.02px;white-space:pre;color:#838383;">1.00V</span><span class="abs" style="left:1467px;top:340px;line-height:0"><svg width="9" height="5" viewBox="0 0 9 5"><path d="M0.5 0.5l4 4l4-4" fill="none" stroke="#a8a8a8" stroke-width="1.1"/></svg></span>
<div class="cb dis" style="left:1421px;top:359px;width:60px"></div><span class="abs" style="left:1424.33px;top:363px;font-size:11px;line-height:14px;letter-spacing:-1.25px;white-space:pre;color:#838383;">DC</span><span class="abs" style="left:1467px;top:368px;line-height:0"><svg width="9" height="5" viewBox="0 0 9 5"><path d="M0.5 0.5l4 4l4-4" fill="none" stroke="#a8a8a8" stroke-width="1.1"/></svg></span>
<div class="cb dis" style="left:1421px;top:387px;width:60px"></div><span class="abs" style="left:1425.08px;top:391px;font-size:11px;line-height:14px;letter-spacing:0.10px;white-space:pre;color:#838383;">x 1</span><span class="abs" style="left:1467px;top:396px;line-height:0"><svg width="9" height="5" viewBox="0 0 9 5"><path d="M0.5 0.5l4 4l4-4" fill="none" stroke="#a8a8a8" stroke-width="1.1"/></svg></span>
<svg class="abs" style="left:1498.2px;top:321.8px" width="90" height="90" viewBox="-45 -45 90 90"><path d="M-19.8 19.1L-31.5 30.1M23.7 22.8L31.4 30" stroke="#000" stroke-width="1.2" fill="none"/><path d="M-26.11 23.63A35.7 34.65 0 1 1 26.11 23.63" fill="none" stroke="#fff" stroke-width="3.2"/><path d="M-27.21 24.76A37.2 36.3 0 1 1 27.21 24.76" fill="none" stroke="#000" stroke-width="1"/><ellipse rx="34.2" ry="33" fill="#b8b8b8" stroke="#000" stroke-width="1"/><path d="M-23.76 22.91A33.6 32.4 0 1 1 24.57 -22.10L20.33 -18.21A27.8 26.7 0 1 0 -19.66 18.88z" fill="#d6d6d6"/><path d="M24.57 -22.10L20.33 -18.21" stroke="#000" stroke-width=".8"/><ellipse rx="28" ry="26.9" fill="#a0a0a0" stroke="#000" stroke-width="1"/><path d="M-5.2 -2.8L-20.8 -10.1" stroke="#fff" stroke-width="1.6" fill="none"/></svg>
<div class="grp" style="left:1424px;top:429px;width:174px;height:137px"></div><div class="abs" style="left:1496px;top:428px;width:40px;height:3px;background:#f0f0f0"></div><span class="abs" style="left:1499.17px;top:422px;font-size:11px;line-height:14px;letter-spacing:-0.02px;white-space:pre;">Trigger</span>
<div class="abs" style="left:1424px;top:447px;width:1px;height:21px;background:#f0f0f0"></div>
<span class="abs" style="left:1422.17px;top:450px;font-size:11px;line-height:14px;letter-spacing:-0.17px;white-space:pre;background:#f0f0f0;">Trigger Mode</span>
<div class="cb" style="left:1523px;top:449px;width:62px"></div><span class="abs" style="left:1526.42px;top:453px;font-size:11px;line-height:14px;letter-spacing:-0.27px;white-space:pre;color:#000;">Edge</span><span class="abs" style="left:1571px;top:458px;line-height:0"><svg width="9" height="5" viewBox="0 0 9 5"><path d="M0.5 0.5l4 4l4-4" fill="none" stroke="#404040" stroke-width="1.1"/></svg></span>
<div class="abs" style="left:1424px;top:477px;width:1px;height:21px;background:#f0f0f0"></div>
<span class="abs" style="left:1422.17px;top:480px;font-size:11px;line-height:14px;letter-spacing:0.07px;white-space:pre;background:#f0f0f0;">Trigger Sweep</span>
<div class="cb" style="left:1523px;top:478px;width:62px"></div><span class="abs" style="left:1527.30px;top:482px;font-size:11px;line-height:14px;letter-spacing:-0.02px;white-space:pre;color:#000;">Auto</span><span class="abs" style="left:1571px;top:487px;line-height:0"><svg width="9" height="5" viewBox="0 0 9 5"><path d="M0.5 0.5l4 4l4-4" fill="none" stroke="#404040" stroke-width="1.1"/></svg></span>
<div class="abs" style="left:1424px;top:506px;width:1px;height:21px;background:#f0f0f0"></div>
<span class="abs" style="left:1422.17px;top:509px;font-size:11px;line-height:14px;letter-spacing:-0.03px;white-space:pre;background:#f0f0f0;">Trigger Source</span>
<div class="cb" style="left:1523px;top:508px;width:62px"></div><span class="abs" style="left:1526.80px;top:512px;font-size:11px;line-height:14px;letter-spacing:-1.10px;white-space:pre;color:#000;">CH1</span><span class="abs" style="left:1571px;top:517px;line-height:0"><svg width="9" height="5" viewBox="0 0 9 5"><path d="M0.5 0.5l4 4l4-4" fill="none" stroke="#404040" stroke-width="1.1"/></svg></span>
<div class="abs" style="left:1424px;top:536px;width:1px;height:21px;background:#f0f0f0"></div>
<span class="abs" style="left:1422.17px;top:539px;font-size:11px;line-height:14px;letter-spacing:-0.13px;white-space:pre;background:#f0f0f0;">Trigger Slope</span>
<div class="cb" style="left:1523px;top:538px;width:62px"></div><span class="abs" style="left:1527.50px;top:542px;font-size:11px;line-height:14px;letter-spacing:0.00px;white-space:pre;color:#000;">+</span><span class="abs" style="left:1571px;top:547px;line-height:0"><svg width="9" height="5" viewBox="0 0 9 5"><path d="M0.5 0.5l4 4l4-4" fill="none" stroke="#404040" stroke-width="1.1"/></svg></span>
<div class="abs" style="left:2px;top:837px;width:1598px;height:2px;background:#fff"></div>
<div class="abs" style="left:1px;top:839px;width:1599px;height:1px;background:#e3e3e3"></div>
<div class="abs" style="left:0;top:840px;width:1600px;height:1px;background:#fff"></div>
<div class="abs" style="left:0;top:841px;width:1600px;height:1px;background:#d7d7d7"></div>
<div id="status" class="abs"><i class="abs" style="left:1491px;top:1px;width:1px;height:15px;background:#d0d0d0"></i></div><span class="abs" style="left:1.77px;top:844px;font-size:12.5px;line-height:16px;letter-spacing:-0.27px;white-space:pre;">Connected</span><span class="abs" style="left:109.00px;top:844px;font-size:12.5px;line-height:16px;letter-spacing:-0.55px;white-space:pre;">Freq = 996.340 Hz</span><span class="abs" style="left:228.05px;top:844px;font-size:12.5px;line-height:16px;letter-spacing:-0.46px;white-space:pre;">Time = 1.004 mS</span><span class="abs" style="left:346.00px;top:844px;font-size:12.5px;line-height:16px;letter-spacing:-0.44px;white-space:pre;">Volt = -1.902 V</span><span class="abs" style="left:1495.72px;top:844px;font-size:12.5px;line-height:16px;letter-spacing:-0.70px;white-space:pre;">18-08-2016  23:23</span>
</body></html>
